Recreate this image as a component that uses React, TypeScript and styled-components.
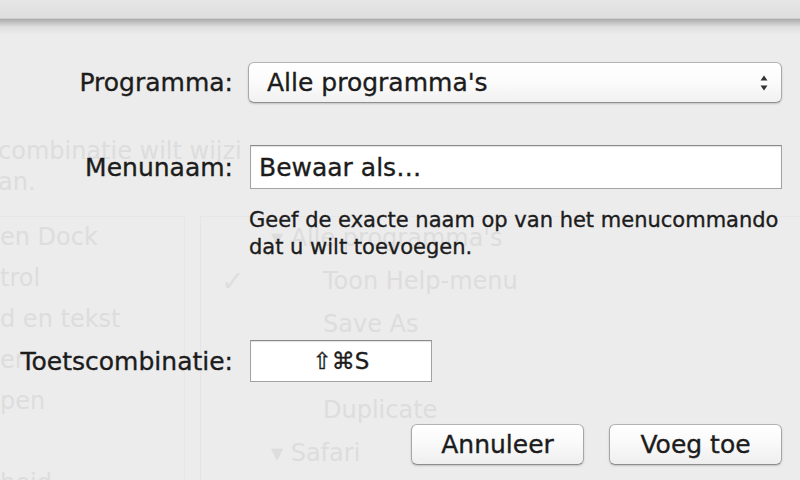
import React from "react";
import styled, { createGlobalStyle } from "styled-components";

const GlobalStyle = createGlobalStyle`
  html, body {
    margin: 0;
    padding: 0;
    background: #ececec;
  }
  body {
    font-family: "DejaVu Sans", "Liberation Sans", sans-serif;
    -webkit-font-smoothing: antialiased;
  }
`;

const ghostRowsLeft = ["en Dock", "trol", "d en tekst", "er", "pen", "", "heid"];

type TreeRow = { text: string; kind: "group" | "item"; checked?: boolean };

const ghostRowsRight: TreeRow[] = [
  { text: "▾ Alle programma's", kind: "group" },
  { text: "Toon Help-menu", kind: "item", checked: true },
  { text: "Save As", kind: "item" },
  { text: "", kind: "item" },
  { text: "Duplicate", kind: "item" },
  { text: "▾ Safari", kind: "group" },
];

const App: React.FC = () => {
  return (
    <>
      <GlobalStyle />
      <Screen>
        <TitleStrip />
        <WindowBody>
          <Hint>
            <p>combinatie wilt wijzi</p>
            <p>an.</p>
          </Hint>
          <Panes>
            <Sidebar>
              {ghostRowsLeft.map((t, i) => (
                <SideRow key={i}>{t}</SideRow>
              ))}
            </Sidebar>
            <TreePane>
              {ghostRowsRight.map((r, i) => (
                <TreeRowEl key={i} $kind={r.kind}>
                  {r.checked && <Check>✓</Check>}
                  {r.text}
                </TreeRowEl>
              ))}
            </TreePane>
          </Panes>
        </WindowBody>

        <Sheet>
          <FormRow>
            <Label>Programma:</Label>
            <Popup>
              <span>Alle programma's</span>
              <svg width="10" height="20" viewBox="0 0 10 20">
                <path d="M5 2.5 L8.5 7.5 H1.5 Z" fill="#333" />
                <path d="M5 17.5 L8.5 12.5 H1.5 Z" fill="#333" />
              </svg>
            </Popup>
          </FormRow>

          <FormRow $gap={42}>
            <Label>Menunaam:</Label>
            <TextField $height={44}>Bewaar als…</TextField>
          </FormRow>

          <HelpText>
            Geef de exacte naam op van het menucommando
            <br />
            dat u wilt toevoegen.
          </HelpText>

          <FormRow $gap={79}>
            <Label>Toetscombinatie:</Label>
            <ShortcutField>⇧⌘S</ShortcutField>
          </FormRow>

          <ButtonRow>
            <PushButton>Annuleer</PushButton>
            <PushButton>Voeg toe</PushButton>
          </ButtonRow>
        </Sheet>
      </Screen>
    </>
  );
};

const Screen = styled.div`
  position: relative;
  width: 800px;
  height: 480px;
  overflow: hidden;
  background: #ececec;
`;

const TitleStrip = styled.div`
  height: 18px;
  background: linear-gradient(#e6e6e6, #dedede);
  border-bottom: 1px solid #cdcdcd;
`;

/* window content that shows through the translucent sheet */
const WindowBody = styled.div`
  padding-top: 117px;
  color: #dddddd;
  font-size: 24px;
  line-height: 31px;
  white-space: nowrap;
`;

const Hint = styled.div`
  margin-left: -2px;
  p {
    margin: 0;
  }
`;

const Panes = styled.div`
  display: grid;
  grid-template-columns: 185px 1fr;
  column-gap: 15px;
  margin-top: 18px;
`;

const Sidebar = styled.div`
  display: flex;
  flex-direction: column;
  border-top: 1px solid #e6e6e6;
  border-right: 1px solid #e7e7e7;
`;

const SideRow = styled.div`
  height: 41px;
  line-height: 41px;
`;

const TreePane = styled.div`
  display: flex;
  flex-direction: column;
  border-left: 1px solid #e4e4e4;
  border-top: 1px solid #e6e6e6;
`;

const TreeRowEl = styled.div<{ $kind: "group" | "item" }>`
  position: relative;
  height: 43px;
  line-height: 43px;
  padding-left: ${(p) => (p.$kind === "group" ? "70px" : "122px")};
`;

const Check = styled.span`
  position: absolute;
  left: 20px;
  top: 0;
  font-size: 28px;
  color: #dedede;
`;

/* the sheet lies over the window with its drop shadow at the top */
const Sheet = styled.div`
  position: absolute;
  top: 19px;
  left: 0;
  right: 0;
  bottom: 0;
  padding-top: 43px;
  background: linear-gradient(rgba(90, 90, 90, 0.45), rgba(140, 140, 140, 0.12) 8px, rgba(236, 236, 236, 0) 16px);
  color: #1c1c1c;
  -webkit-text-stroke: 0.35px #1c1c1c;
`;

const FormRow = styled.div<{ $gap?: number }>`
  display: flex;
  align-items: center;
  gap: 15px;
  margin-top: ${(p) => p.$gap ?? 0}px;
`;

const Label = styled.div`
  width: 233px;
  text-align: right;
  font-size: 25px;
  white-space: nowrap;
`;

const Popup = styled.div`
  box-sizing: border-box;
  width: 534px;
  height: 41px;
  display: flex;
  align-items: center;
  justify-content: space-between;
  padding: 0 12px 0 18px;
  border: 1px solid #a9a9a9;
  border-top-color: #b4b4b4;
  border-bottom-color: #8f8f8f;
  border-radius: 6px;
  background: linear-gradient(#ffffff, #fbfbfb 50%, #f1f1f1);
  box-shadow: 0 1px 2px rgba(0, 0, 0, 0.18);
  font-size: 25px;
  white-space: nowrap;

  svg {
    -webkit-text-stroke: 0;
  }
`;

const TextField = styled.div<{ $height: number }>`
  box-sizing: border-box;
  width: 532px;
  height: ${(p) => p.$height}px;
  margin-left: 2px;
  display: flex;
  align-items: center;
  padding: 0 8px;
  background: #fff;
  border: 1px solid #a2a2a2;
  border-top-color: #8a8a8a;
  box-shadow: inset 0 1px 1px rgba(0, 0, 0, 0.12);
  font-size: 25px;
  white-space: nowrap;
`;

const ShortcutField = styled(TextField).attrs({ $height: 42 })`
  width: 182px;
  justify-content: center;
  font-size: 23px;
`;

const HelpText = styled.p`
  margin: 18px 0 0 249px;
  font-size: 21px;
  line-height: 27px;
  white-space: nowrap;
`;

const ButtonRow = styled.div`
  display: flex;
  justify-content: flex-end;
  gap: 25px;
  margin-top: 42px;
  padding-right: 18px;
`;

const PushButton = styled.button`
  box-sizing: border-box;
  width: 173px;
  height: 41px;
  padding: 0;
  border: 1px solid #a6a6a6;
  border-top-color: #b3b3b3;
  border-bottom-color: #8c8c8c;
  border-radius: 6px;
  background: linear-gradient(#ffffff, #f9f9f9 50%, #eeeeee);
  box-shadow: 0 1px 2px rgba(0, 0, 0, 0.18);
  font-family: "DejaVu Sans", "Liberation Sans", sans-serif;
  font-size: 25px;
  color: #1c1c1c;
  -webkit-text-stroke: 0.35px #1c1c1c;
`;

export default App;
